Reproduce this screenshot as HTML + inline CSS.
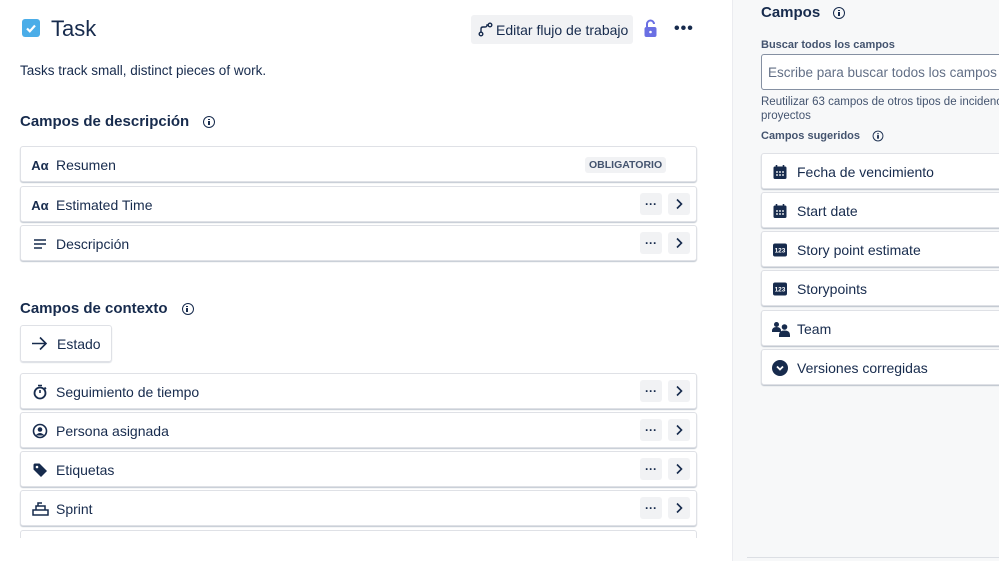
<!DOCTYPE html>
<html><head><meta charset="utf-8"><style>
*{box-sizing:border-box;margin:0;padding:0}
body{width:999px;height:561px;overflow:hidden;background:#fff;font-family:"Liberation Sans",sans-serif;color:#172b4d;position:relative}
.a{position:absolute}
.row{position:absolute;left:20px;width:677px;height:36px;border:1px solid #dfe1e6;border-radius:3px;box-shadow:0 1px 1px rgba(9,30,66,.25);background:#fff;font-size:14px;display:flex;align-items:center}
.row .ic{position:absolute;left:10px;top:9px;width:18px;height:18px;display:flex;align-items:center;justify-content:center}
.row .t{position:absolute;left:35px;top:10px}
.btn{position:absolute;top:6px;width:22px;height:22px;background:#f1f2f4;border-radius:3px;display:flex;align-items:center;justify-content:center;font-size:12px;font-weight:bold;color:#172b4d}
.b1{left:619px}.b2{left:647px}
.h{font-size:15px;font-weight:bold}
.info{display:inline-block;width:12px;height:12px;border:1.5px solid #172b4d;border-radius:50%;position:relative;vertical-align:middle}
.info:after{content:"";position:absolute;left:3.5px;top:4px;width:2px;height:4px;background:#172b4d}
.info:before{content:"";position:absolute;left:3.5px;top:1.5px;width:2px;height:1.5px;background:#172b4d}
.card{position:absolute;left:761px;width:260px;height:36px;background:#fff;border:1px solid #dfe1e6;border-radius:3px;box-shadow:0 1px 1px rgba(9,30,66,.25);font-size:14px}
.card .ic{position:absolute;left:10px;top:10px;width:16px;height:16px}
.card .t{position:absolute;left:35px;top:10px}
</style></head><body>
<div class="a" style="left:22px;top:19px;width:18px;height:18px;background:#4bade8;border-radius:3px"><svg width="18" height="18"><path d="M5 9.5l2.8 2.8L13 6.5" stroke="#fff" stroke-width="2.2" fill="none"/></svg></div>
<div class="a" style="left:51px;top:16px;font-size:22px;color:#172b4d">Task</div>
<div class="a" style="left:471px;top:15px;width:162px;height:29px;background:#f1f2f4;border-radius:3px;font-size:14px"><svg class="a" style="left:7px;top:7px" width="15" height="15"><circle cx="3" cy="12" r="1.8" stroke="#172b4d" fill="none" stroke-width="1.4"/><circle cx="12" cy="3" r="1.8" stroke="#172b4d" fill="none" stroke-width="1.4"/><path d="M3 10V7q0-2 2-2h2q2 0 2-2h1" stroke="#172b4d" fill="none" stroke-width="1.4"/></svg><span class="a" style="left:25px;top:7px">Editar flujo de trabajo</span></div>
<svg class="a" style="left:643px;top:19px" width="16" height="19"><path d="M4 8V5a3.5 3.5 0 0 1 7 0" stroke="#6a6fe3" stroke-width="2" fill="none"/><rect x="1.5" y="8" width="12" height="10" rx="2" fill="#6a6fe3"/><circle cx="7.5" cy="13" r="1.3" fill="#fff"/></svg>
<div class="a" style="left:674px;top:20px;font-size:16px;font-weight:bold;letter-spacing:1px">•••</div>
<div class="a" style="left:20px;top:63px;font-size:13.5px">Tasks track small, distinct pieces of work.</div>
<div class="a h" style="left:20px;top:113px">Campos de descripción <span class="info" style="margin-left:10px"></span></div>
<div class="row" style="top:146px"><span class="ic" style="font-weight:bold;font-size:13px">Aα</span><span class="t">Resumen</span><span class="a" style="left:564px;top:10px;background:#f1f2f4;border-radius:3px;font-size:10.5px;font-weight:bold;padding:2px 4px;color:#44546f">OBLIGATORIO</span></div>
<div class="row" style="top:186px"><span class="ic" style="font-weight:bold;font-size:13px">Aα</span><span class="t">Estimated Time</span><span class="btn b1">···</span><span class="btn b2"><svg width="8" height="12"><path d="M2 1.5l4.5 4.5L2 10.5" stroke="#172b4d" stroke-width="1.6" fill="none"/></svg></span></div>
<div class="row" style="top:225px"><span class="ic"><svg width="14" height="12"><path d="M1 2h12M1 6h12M1 10h8" stroke="#172b4d" stroke-width="1.6"/></svg></span><span class="t">Descripción</span><span class="btn b1">···</span><span class="btn b2"><svg width="8" height="12"><path d="M2 1.5l4.5 4.5L2 10.5" stroke="#172b4d" stroke-width="1.6" fill="none"/></svg></span></div>
<div class="a h" style="left:20px;top:300px">Campos de contexto <span class="info" style="margin-left:10px"></span></div>
<div class="a" style="left:20px;top:325px;width:92px;height:37px;border:1px solid #dfe1e6;border-radius:3px;box-shadow:0 1px 1px rgba(9,30,66,.15);font-size:14px"><svg class="a" style="left:10px;top:10px" width="17" height="15"><path d="M1 7.5h14M9 1.5l6 6-6 6" stroke="#172b4d" stroke-width="1.6" fill="none"/></svg><span class="a" style="left:36px;top:10px">Estado</span></div>
<div class="row" style="top:373px"><span class="ic"><svg width="16" height="16"><circle cx="8" cy="9" r="5.5" stroke="#172b4d" stroke-width="1.8" fill="none"/><path d="M6 1.5h4M8 9V6M12.5 3.5l1.5 1.5" stroke="#172b4d" stroke-width="1.6"/></svg></span><span class="t">Seguimiento de tiempo</span><span class="btn b1">···</span><span class="btn b2"><svg width="8" height="12"><path d="M2 1.5l4.5 4.5L2 10.5" stroke="#172b4d" stroke-width="1.6" fill="none"/></svg></span></div>
<div class="row" style="top:412px"><span class="ic"><svg width="16" height="16"><circle cx="8" cy="8" r="6.5" stroke="#172b4d" stroke-width="1.6" fill="none"/><circle cx="8" cy="6.5" r="2.3" fill="#172b4d"/><path d="M3.5 12.5q4.5-5 9 0" fill="#172b4d"/></svg></span><span class="t">Persona asignada</span><span class="btn b1">···</span><span class="btn b2"><svg width="8" height="12"><path d="M2 1.5l4.5 4.5L2 10.5" stroke="#172b4d" stroke-width="1.6" fill="none"/></svg></span></div>
<div class="row" style="top:451px"><span class="ic"><svg width="16" height="16"><path d="M1.5 2.5v5l7.5 7.5 6-6-7.5-7.5h-5z" fill="#172b4d"/><circle cx="5" cy="5" r="1.3" fill="#fff"/></svg></span><span class="t">Etiquetas</span><span class="btn b1">···</span><span class="btn b2"><svg width="8" height="12"><path d="M2 1.5l4.5 4.5L2 10.5" stroke="#172b4d" stroke-width="1.6" fill="none"/></svg></span></div>
<div class="row" style="top:490px"><span class="ic"><svg width="17" height="14"><path d="M1 8h15v5H1zM4 8V4h9v4M6 4V1h4" stroke="#172b4d" stroke-width="1.5" fill="none"/></svg></span><span class="t">Sprint</span><span class="btn b1">···</span><span class="btn b2"><svg width="8" height="12"><path d="M2 1.5l4.5 4.5L2 10.5" stroke="#172b4d" stroke-width="1.6" fill="none"/></svg></span></div>
<div class="row" style="top:530px;height:30px;box-shadow:none"></div>
<div class="a" style="left:0;top:538px;width:732px;height:23px;background:#fff"></div>
<div class="a" style="left:732px;top:0;width:267px;height:561px;background:#f7f8f9;border-left:1px solid #ebecf0"></div>
<div class="a" style="left:747px;top:557px;width:252px;height:1px;background:#dcdfe4"></div>
<div class="a" style="left:761px;top:4px;font-size:15px;font-weight:bold">Campos <span class="info" style="margin-left:9px"></span></div>
<div class="a" style="left:761px;top:39px;font-size:11px;font-weight:bold;color:#44546f">Buscar todos los campos</div>
<div class="a" style="left:761px;top:54px;width:260px;height:36px;background:#fff;border:1.5px solid #8590a2;border-radius:3px;font-size:13.5px;color:#626f86;padding:10px 0 0 6px;white-space:nowrap">Escribe para buscar todos los campos</div>
<div class="a" style="left:761px;top:95px;font-size:11.5px;color:#44546f;line-height:14px;white-space:nowrap">Reutilizar 63 campos de otros tipos de incidencia<br>proyectos</div>
<div class="a" style="left:761px;top:130px;font-size:11px;font-weight:bold;color:#44546f">Campos sugeridos <span class="info" style="margin-left:9px;transform:scale(.9)"></span></div>
<div class="card" style="top:153px"><svg class="ic" viewBox="0 0 16 16"><rect x="1.5" y="2.5" width="13" height="12.5" rx="1.5" fill="#172b4d"/><path d="M4.5 1v3M11.5 1v3" stroke="#172b4d" stroke-width="1.6"/><path d="M4 8h2M7 8h2M10 8h2M4 11h2M7 11h2M10 11h2" stroke="#fff" stroke-width="1.3"/></svg><span class="t">Fecha de vencimiento</span></div>
<div class="card" style="top:192px"><svg class="ic" viewBox="0 0 16 16"><rect x="1.5" y="2.5" width="13" height="12.5" rx="1.5" fill="#172b4d"/><path d="M4.5 1v3M11.5 1v3" stroke="#172b4d" stroke-width="1.6"/><path d="M4 8h2M7 8h2M10 8h2M4 11h2M7 11h2M10 11h2" stroke="#fff" stroke-width="1.3"/></svg><span class="t">Start date</span></div>
<div class="card" style="top:231px"><svg class="ic" viewBox="0 0 16 16"><rect x="1" y="1.5" width="14" height="13" rx="2" fill="#172b4d"/><text x="8" y="10.5" font-size="6.5" fill="#fff" text-anchor="middle" font-family="Liberation Sans" font-weight="bold">123</text></svg><span class="t">Story point estimate</span></div>
<div class="card" style="top:270px"><svg class="ic" viewBox="0 0 16 16"><rect x="1" y="1.5" width="14" height="13" rx="2" fill="#172b4d"/><text x="8" y="10.5" font-size="6.5" fill="#fff" text-anchor="middle" font-family="Liberation Sans" font-weight="bold">123</text></svg><span class="t">Storypoints</span></div>
<div class="card" style="top:310px"><svg class="ic" viewBox="0 0 18 16" style="width:18px"><circle cx="4.5" cy="3.5" r="2.5" fill="#172b4d"/><path d="M0 10q0-4 4.5-4t4.5 4v1H0z" fill="#172b4d"/><circle cx="12.5" cy="6" r="2.8" fill="#172b4d"/><path d="M7 16v-2q0-4.5 5.5-4.5T18 14v2z" fill="#172b4d"/></svg><span class="t">Team</span></div>
<div class="card" style="top:349px"><svg class="ic" viewBox="0 0 16 16"><circle cx="8" cy="8" r="8" fill="#172b4d"/><path d="M5 6.5l3 3 3-3" stroke="#fff" stroke-width="1.8" fill="none"/></svg><span class="t">Versiones corregidas</span></div>
</body></html>
